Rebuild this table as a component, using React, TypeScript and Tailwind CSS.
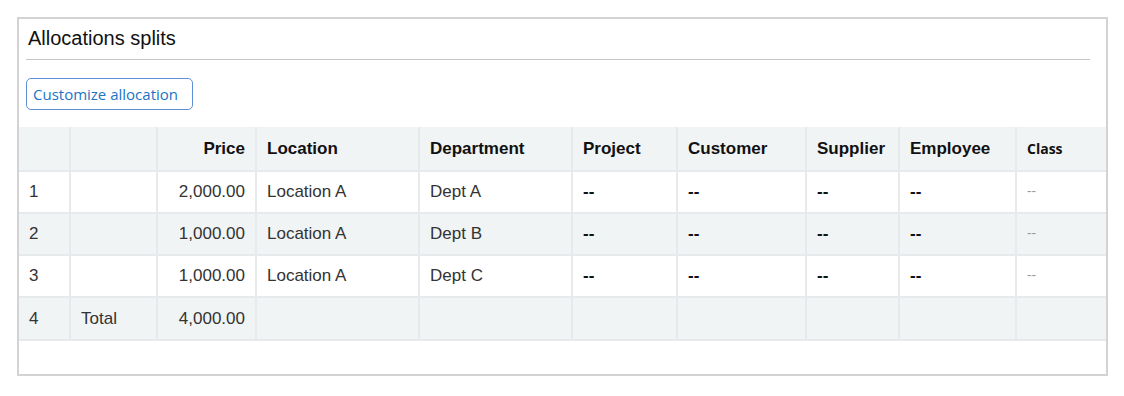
const cols = [
  { label: '', w: 'w-[51px]' },
  { label: '', w: 'w-[87px]' },
  { label: 'Price', w: 'w-[99px]', right: true },
  { label: 'Location', w: 'w-[163px]' },
  { label: 'Department', w: 'w-[153px]' },
  { label: 'Project', w: 'w-[105px]' },
  { label: 'Customer', w: 'w-[129px]' },
  { label: 'Supplier', w: 'w-[93px]' },
  { label: 'Employee', w: 'w-[117px]' },
];

const rows = [
  { n: '1', price: '2,000.00', loc: 'Location A', dept: 'Dept A' },
  { n: '2', price: '1,000.00', loc: 'Location A', dept: 'Dept B' },
  { n: '3', price: '1,000.00', loc: 'Location A', dept: 'Dept C' },
];

const td = 'border-2 border-[#e6eaec] px-[10px]';

export default function App() {
  return (
    <div className="bg-white w-[1124px] h-[396px] pt-[17px] pl-[17px] font-['Liberation_Sans',Arial,sans-serif]">
      <div className="w-[1091px] h-[359px] border-2 border-[#d3d3d3] flex flex-col">
        <div className="pl-[9px] pt-[6px] text-[20px] leading-[26px] text-[#111]">Allocations splits</div>
        <div className="mt-[8px] ml-[7px] mr-[16px] h-px bg-[#c6c6c6]"></div>
        <div className="pl-[7px] mt-[18px]">
          <button className="h-[32px] w-[167px] px-[6px] text-left border border-[#5e8fd8] rounded-[5px] text-[15px] text-[#1b74c6] font-['Open_Sans',sans-serif]">
            Customize allocation
          </button>
        </div>
        <table className="mt-[17px] w-[1087px] border-collapse table-fixed text-[17px] text-[#333]">
          <thead>
            <tr className="h-[44px] bg-[#f1f4f5]">
              {cols.map((c, i) => (
                <th
                  key={i}
                  className={`${td} ${c.w} border-t-0 ${i === 0 ? 'border-l-0' : ''} font-bold text-[#111] ${c.right ? 'text-right' : 'text-left'}`}
                >
                  {c.label}
                </th>
              ))}
              <th className={`${td} w-[90px] border-t-0 border-r-0 text-left text-[14px] font-bold text-[#111] font-['Open_Sans',sans-serif]`}>
                Class
              </th>
            </tr>
          </thead>
          <tbody>
            {rows.map((r, i) => (
              <tr key={r.n} className={`h-[42px] ${i % 2 === 1 ? 'bg-[#f1f4f5]' : 'bg-white'}`}>
                <td className={`${td} border-l-0`}>{r.n}</td>
                <td className={td}></td>
                <td className={`${td} text-right`}>{r.price}</td>
                <td className={td}>{r.loc}</td>
                <td className={td}>{r.dept}</td>
                <td className={`${td} font-bold text-[#111]`}>--</td>
                <td className={`${td} font-bold text-[#111]`}>--</td>
                <td className={`${td} font-bold text-[#111]`}>--</td>
                <td className={`${td} font-bold text-[#111]`}>--</td>
                <td className={`${td} border-r-0 pb-[4px] text-[14px] text-[#999] font-['Open_Sans',sans-serif]`}>--</td>
              </tr>
            ))}
            <tr className="h-[43px] bg-[#f1f4f5]">
              <td className={`${td} border-l-0`}>4</td>
              <td className={td}>Total</td>
              <td className={`${td} text-right`}>4,000.00</td>
              <td className={td}></td>
              <td className={td}></td>
              <td className={td}></td>
              <td className={td}></td>
              <td className={td}></td>
              <td className={td}></td>
              <td className={`${td} border-r-0`}></td>
            </tr>
          </tbody>
        </table>
      </div>
    </div>
  );
}
